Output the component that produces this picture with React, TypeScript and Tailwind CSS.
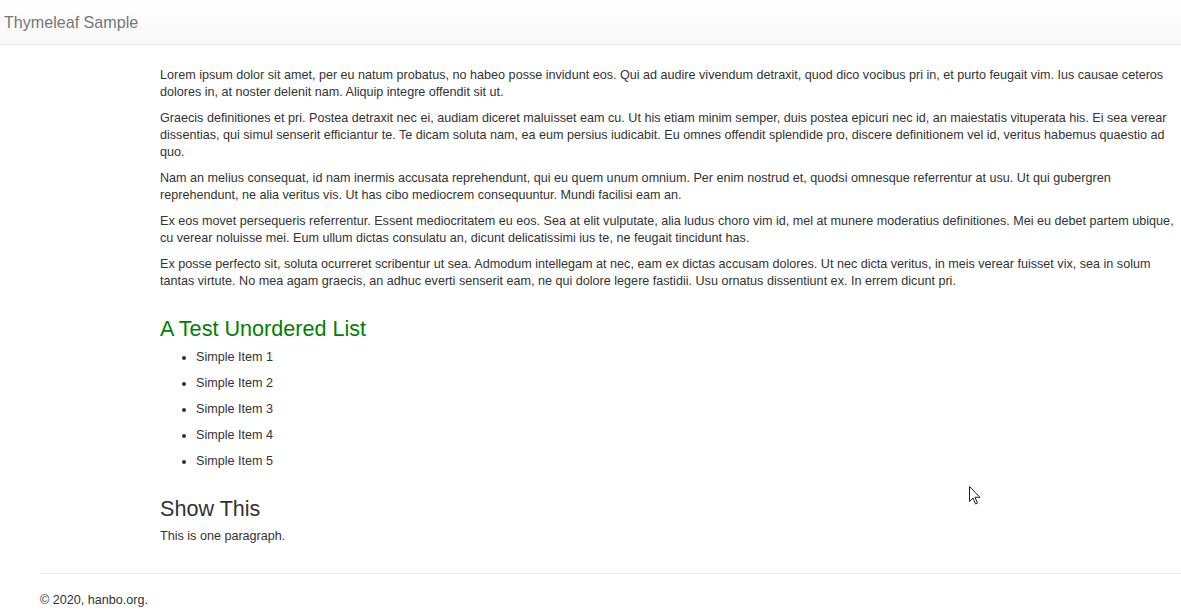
import React from "react";

const paras = [
  "Lorem ipsum dolor sit amet, per eu natum probatus, no habeo posse invidunt eos. Qui ad audire vivendum detraxit, quod dico vocibus pri in, et purto feugait vim. Ius causae ceteros dolores in, at noster delenit nam. Aliquip integre offendit sit ut.",
  "Graecis definitiones et pri. Postea detraxit nec ei, audiam diceret maluisset eam cu. Ut his etiam minim semper, duis postea epicuri nec id, an maiestatis vituperata his. Ei sea verear dissentias, qui simul senserit efficiantur te. Te dicam soluta nam, ea eum persius iudicabit. Eu omnes offendit splendide pro, discere definitionem vel id, veritus habemus quaestio ad quo.",
  "Nam an melius consequat, id nam inermis accusata reprehendunt, qui eu quem unum omnium. Per enim nostrud et, quodsi omnesque referrentur at usu. Ut qui gubergren reprehendunt, ne alia veritus vis. Ut has cibo mediocrem consequuntur. Mundi facilisi eam an.",
  "Ex eos movet persequeris referrentur. Essent mediocritatem eu eos. Sea at elit vulputate, alia ludus choro vim id, mel at munere moderatius definitiones. Mei eu debet partem ubique, cu verear noluisse mei. Eum ullum dictas consulatu an, dicunt delicatissimi ius te, ne feugait tincidunt has.",
  "Ex posse perfecto sit, soluta ocurreret scribentur ut sea. Admodum intellegam at nec, eam ex dictas accusam dolores. Ut nec dicta veritus, in meis verear fuisset vix, sea in solum tantas virtute. No mea agam graecis, an adhuc everti senserit eam, ne qui dolore legere fastidii. Usu ornatus dissentiunt ex. In errem dicunt pri.",
];

export default function App() {
  return (
    <div
      className="relative w-[1181px] h-[611px] overflow-hidden bg-white text-[#333] text-[12.6px] leading-[17px]"
      style={{ fontFamily: '"Liberation Sans", Arial, sans-serif' }}
    >
      <nav className="h-[45px] border-b border-[#e7e7e7] bg-gradient-to-b from-white to-[#f8f8f8] flex items-center pl-[4px]">
        <span className="text-[16.1px] text-[#777] leading-[18px]">Thymeleaf Sample</span>
      </nav>

      <div className="w-[1182px] pl-[160px] pt-[22px]">
        {paras.map((p, i) => (
          <p key={i} className="mb-[9px]">
            {p}
          </p>
        ))}
        <h3 className="text-[21.6px] leading-[23px] text-[#008000] mt-[27px] mb-[9px]">A Test Unordered List</h3>
        <ul className="list-disc pl-[36px]">
          {[1, 2, 3, 4, 5].map((n) => (
            <li key={n} className="mb-[9px]">
              Simple Item {n}
            </li>
          ))}
        </ul>
        <h3 className="text-[21.6px] leading-[23px] text-[#333] mt-[27px] mb-[8px]">Show This</h3>
        <p>This is one paragraph.</p>
      </div>

      <footer className="pl-[40px]">
        <div className="border-t border-[#eee] mt-[28px] pt-[18px]">
          <p>© 2020, hanbo.org.</p>
        </div>
      </footer>

      <svg
        className="absolute left-[969px] top-[486px]"
        width="13"
        height="20"
        viewBox="0 0 13 20"
      >
        <path
          d="M0.5 0.5 L0.5 15.5 L4 12 L6.5 18 L8.5 17.2 L6 11.3 L11 11.3 Z"
          fill="white"
          stroke="#222"
          strokeWidth="1"
          strokeLinejoin="round"
        />
      </svg>
    </div>
  );
}
